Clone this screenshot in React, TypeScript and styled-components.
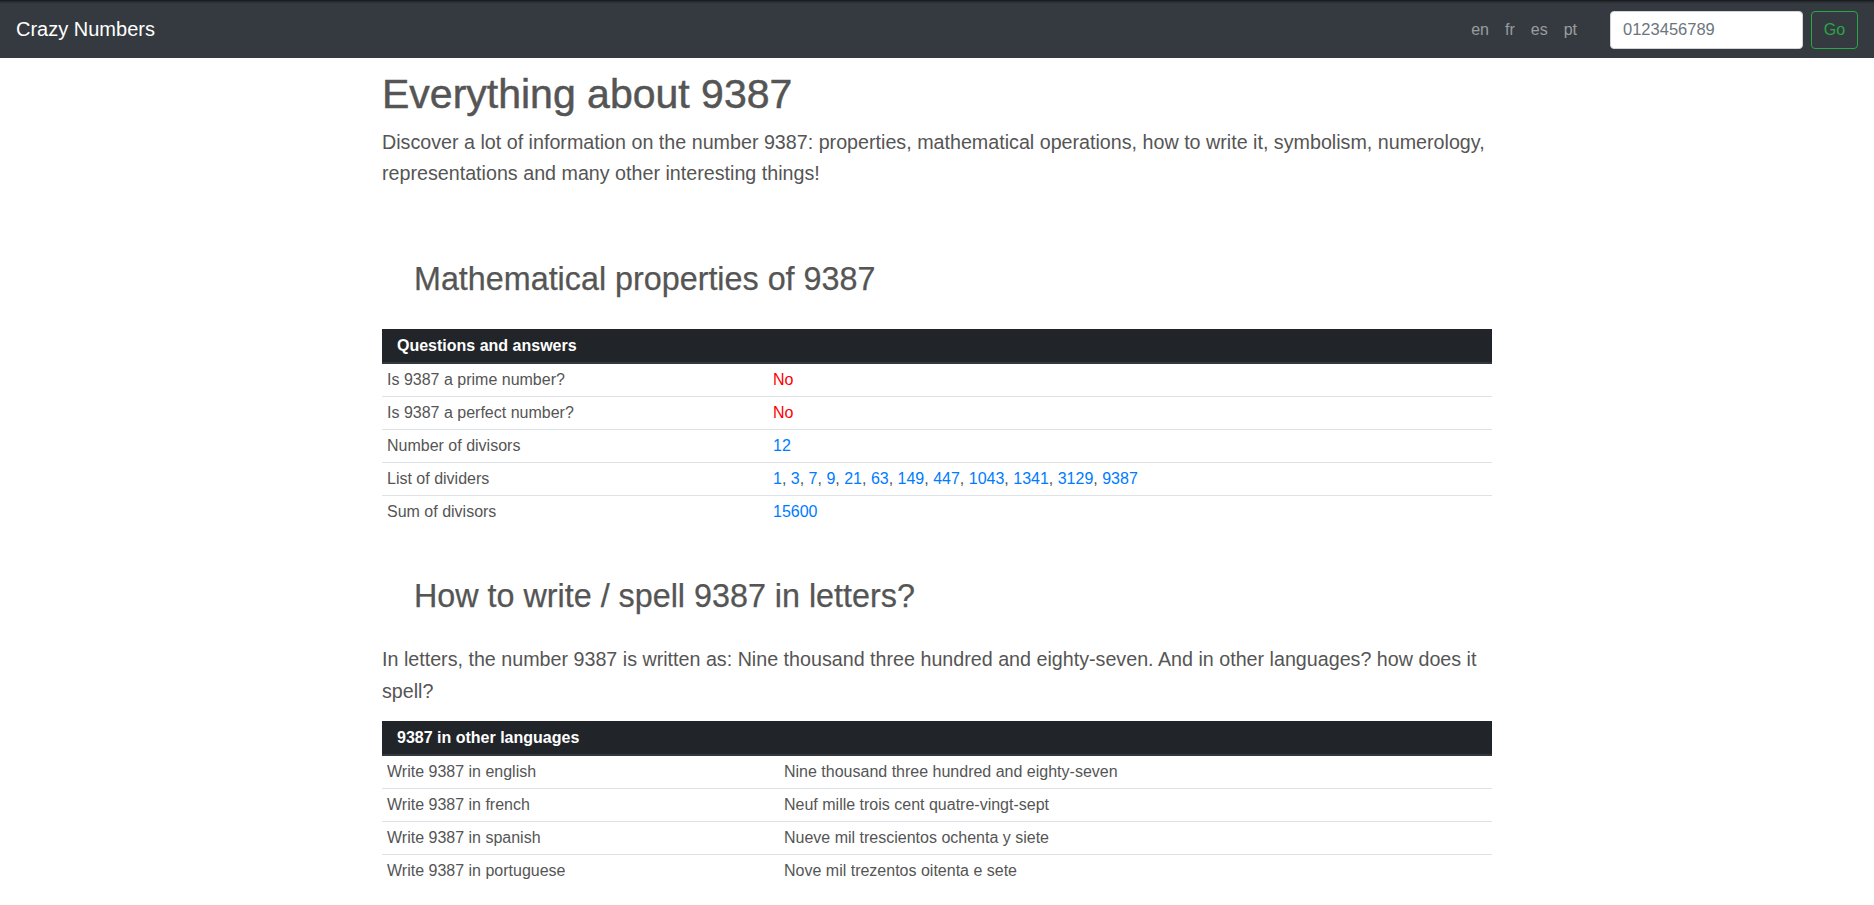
import React from 'react'
import styled, { createGlobalStyle } from 'styled-components'

const GlobalStyle = createGlobalStyle`
  * { box-sizing: border-box; }
  body {
    margin: 0;
    background: #fff;
    font-family: "Liberation Sans", Arial, sans-serif;
    color: #555;
  }
`

const NavBar = styled.nav`
  height: 58px;
  display: flex;
  align-items: center;
  padding: 0 16px;
  background: linear-gradient(to bottom, #141619 0px, #2a2e33 2px, #343a40 4px, #343a40 100%);
`

const Brand = styled.a`
  color: #fff;
  font-size: 20px;
  text-decoration: none;
  margin-top: 1px;
`

const NavRight = styled.div`
  margin-left: auto;
  display: flex;
  align-items: center;
`

const LangList = styled.div`
  display: flex;
  gap: 16px;
  margin-right: 33px;
  margin-top: 1px;
`

const LangLink = styled.a`
  color: rgba(255, 255, 255, 0.5);
  font-size: 16px;
  text-decoration: none;
`

const SearchInput = styled.input`
  width: 193px;
  height: 38px;
  border: 1px solid #ced4da;
  border-radius: 4px;
  padding: 6px 12px;
  font-family: inherit;
  font-size: 16.5px;
  color: #495057;
  background: #fff;
  margin-right: 8px;
  margin-top: 1px;
  &::placeholder { color: #6c757d; }
`

const GoButton = styled.button`
  height: 38px;
  width: 47px;
  border: 1px solid #28a745;
  border-radius: 4px;
  background: transparent;
  color: #28a745;
  font-family: inherit;
  font-size: 16px;
  margin-top: 1px;
`

const Container = styled.main`
  width: 1140px;
  margin: 0 auto;
  padding: 0 15px 40px;
`

// Liberation has no 500 weight: a thin stroke stands in for the medium cut
const Title = styled.h1`
  margin: 12px 0 0;
  font-size: 41px;
  font-weight: 500;
  line-height: 1.2;
  color: #555;
  -webkit-text-stroke: 0.5px #555;
`

const Lead = styled.p`
  margin: 8px 0 0;
  font-size: 19.7px;
  line-height: 31px;
  color: #555;
`

const SectionTitle = styled.h2<{ $top: number }>`
  margin: ${({ $top }) => $top}px 0 0 32px;
  font-size: 32.3px;
  font-weight: 400;
  line-height: 38px;
  color: #555;
  -webkit-text-stroke: 0.25px #555;
`

const Text = styled.p`
  margin: 28px 0 0;
  font-size: 19.7px;
  line-height: 32px;
  color: #555;
`

const Table = styled.table<{ $top: number }>`
  width: 100%;
  border-collapse: collapse;
  margin-top: ${({ $top }) => $top}px;
  font-size: 16px;
`

const HeadCell = styled.th`
  background: #212529;
  color: #fff;
  text-align: left;
  font-weight: 700;
  height: 34px;
  padding: 4px 15px;
  border-bottom: 2px solid #32383e;
`

const Cell = styled.td<{ $width?: number; $tone?: 'red' | 'blue' }>`
  height: 33px;
  padding: 4px 5px;
  border-top: 1px solid #dee2e6;
  color: ${({ $tone }) => ($tone === 'red' ? '#ff0000' : $tone === 'blue' ? '#007bff' : '#555')};
  width: ${({ $width }) => ($width ? `${$width}px` : 'auto')};
  vertical-align: middle;
`

const NumLink = styled.a`
  color: #007bff;
  text-decoration: none;
`

const divisors = [1, 3, 7, 9, 21, 63, 149, 447, 1043, 1341, 3129, 9387]

const languages: [string, string][] = [
  ['Write 9387 in english', 'Nine thousand three hundred and eighty-seven'],
  ['Write 9387 in french', 'Neuf mille trois cent quatre-vingt-sept'],
  ['Write 9387 in spanish', 'Nueve mil trescientos ochenta y siete'],
  ['Write 9387 in portuguese', 'Nove mil trezentos oitenta e sete'],
]

export default function App() {
  return (
    <>
      <GlobalStyle />
      <NavBar>
        <Brand href="#">Crazy Numbers</Brand>
        <NavRight>
          <LangList>
            {['en', 'fr', 'es', 'pt'].map((l) => (
              <LangLink key={l} href="#">{l}</LangLink>
            ))}
          </LangList>
          <SearchInput placeholder="0123456789" />
          <GoButton>Go</GoButton>
        </NavRight>
      </NavBar>
      <Container>
        <Title>Everything about 9387</Title>
        <Lead>
          Discover a lot of information on the number 9387: properties, mathematical operations, how to write it,
          symbolism, numerology, representations and many other interesting things!
        </Lead>

        <SectionTitle $top={71}>Mathematical properties of 9387</SectionTitle>
        <Table $top={31}>
          <thead>
            <tr>
              <HeadCell colSpan={2}>Questions and answers</HeadCell>
            </tr>
          </thead>
          <tbody>
            <tr>
              <Cell $width={386}>Is 9387 a prime number?</Cell>
              <Cell $tone="red">No</Cell>
            </tr>
            <tr>
              <Cell>Is 9387 a perfect number?</Cell>
              <Cell $tone="red">No</Cell>
            </tr>
            <tr>
              <Cell>Number of divisors</Cell>
              <Cell $tone="blue">12</Cell>
            </tr>
            <tr>
              <Cell>List of dividers</Cell>
              <Cell>
                {divisors.map((d, i) => (
                  <React.Fragment key={d}>
                    <NumLink href="#">{d}</NumLink>
                    {i < divisors.length - 1 ? ', ' : ''}
                  </React.Fragment>
                ))}
              </Cell>
            </tr>
            <tr>
              <Cell>Sum of divisors</Cell>
              <Cell $tone="blue">15600</Cell>
            </tr>
          </tbody>
        </Table>

        <SectionTitle $top={49}>How to write / spell 9387 in letters?</SectionTitle>
        <Text>
          In letters, the number 9387 is written as: Nine thousand three hundred and eighty-seven. And in other
          languages? how does it spell?
        </Text>
        <Table $top={14}>
          <thead>
            <tr>
              <HeadCell colSpan={2}>9387 in other languages</HeadCell>
            </tr>
          </thead>
          <tbody>
            {languages.map(([q, a], i) => (
              <tr key={q}>
                <Cell $width={i === 0 ? 397 : undefined}>{q}</Cell>
                <Cell>{a}</Cell>
              </tr>
            ))}
          </tbody>
        </Table>
      </Container>
    </>
  )
}
